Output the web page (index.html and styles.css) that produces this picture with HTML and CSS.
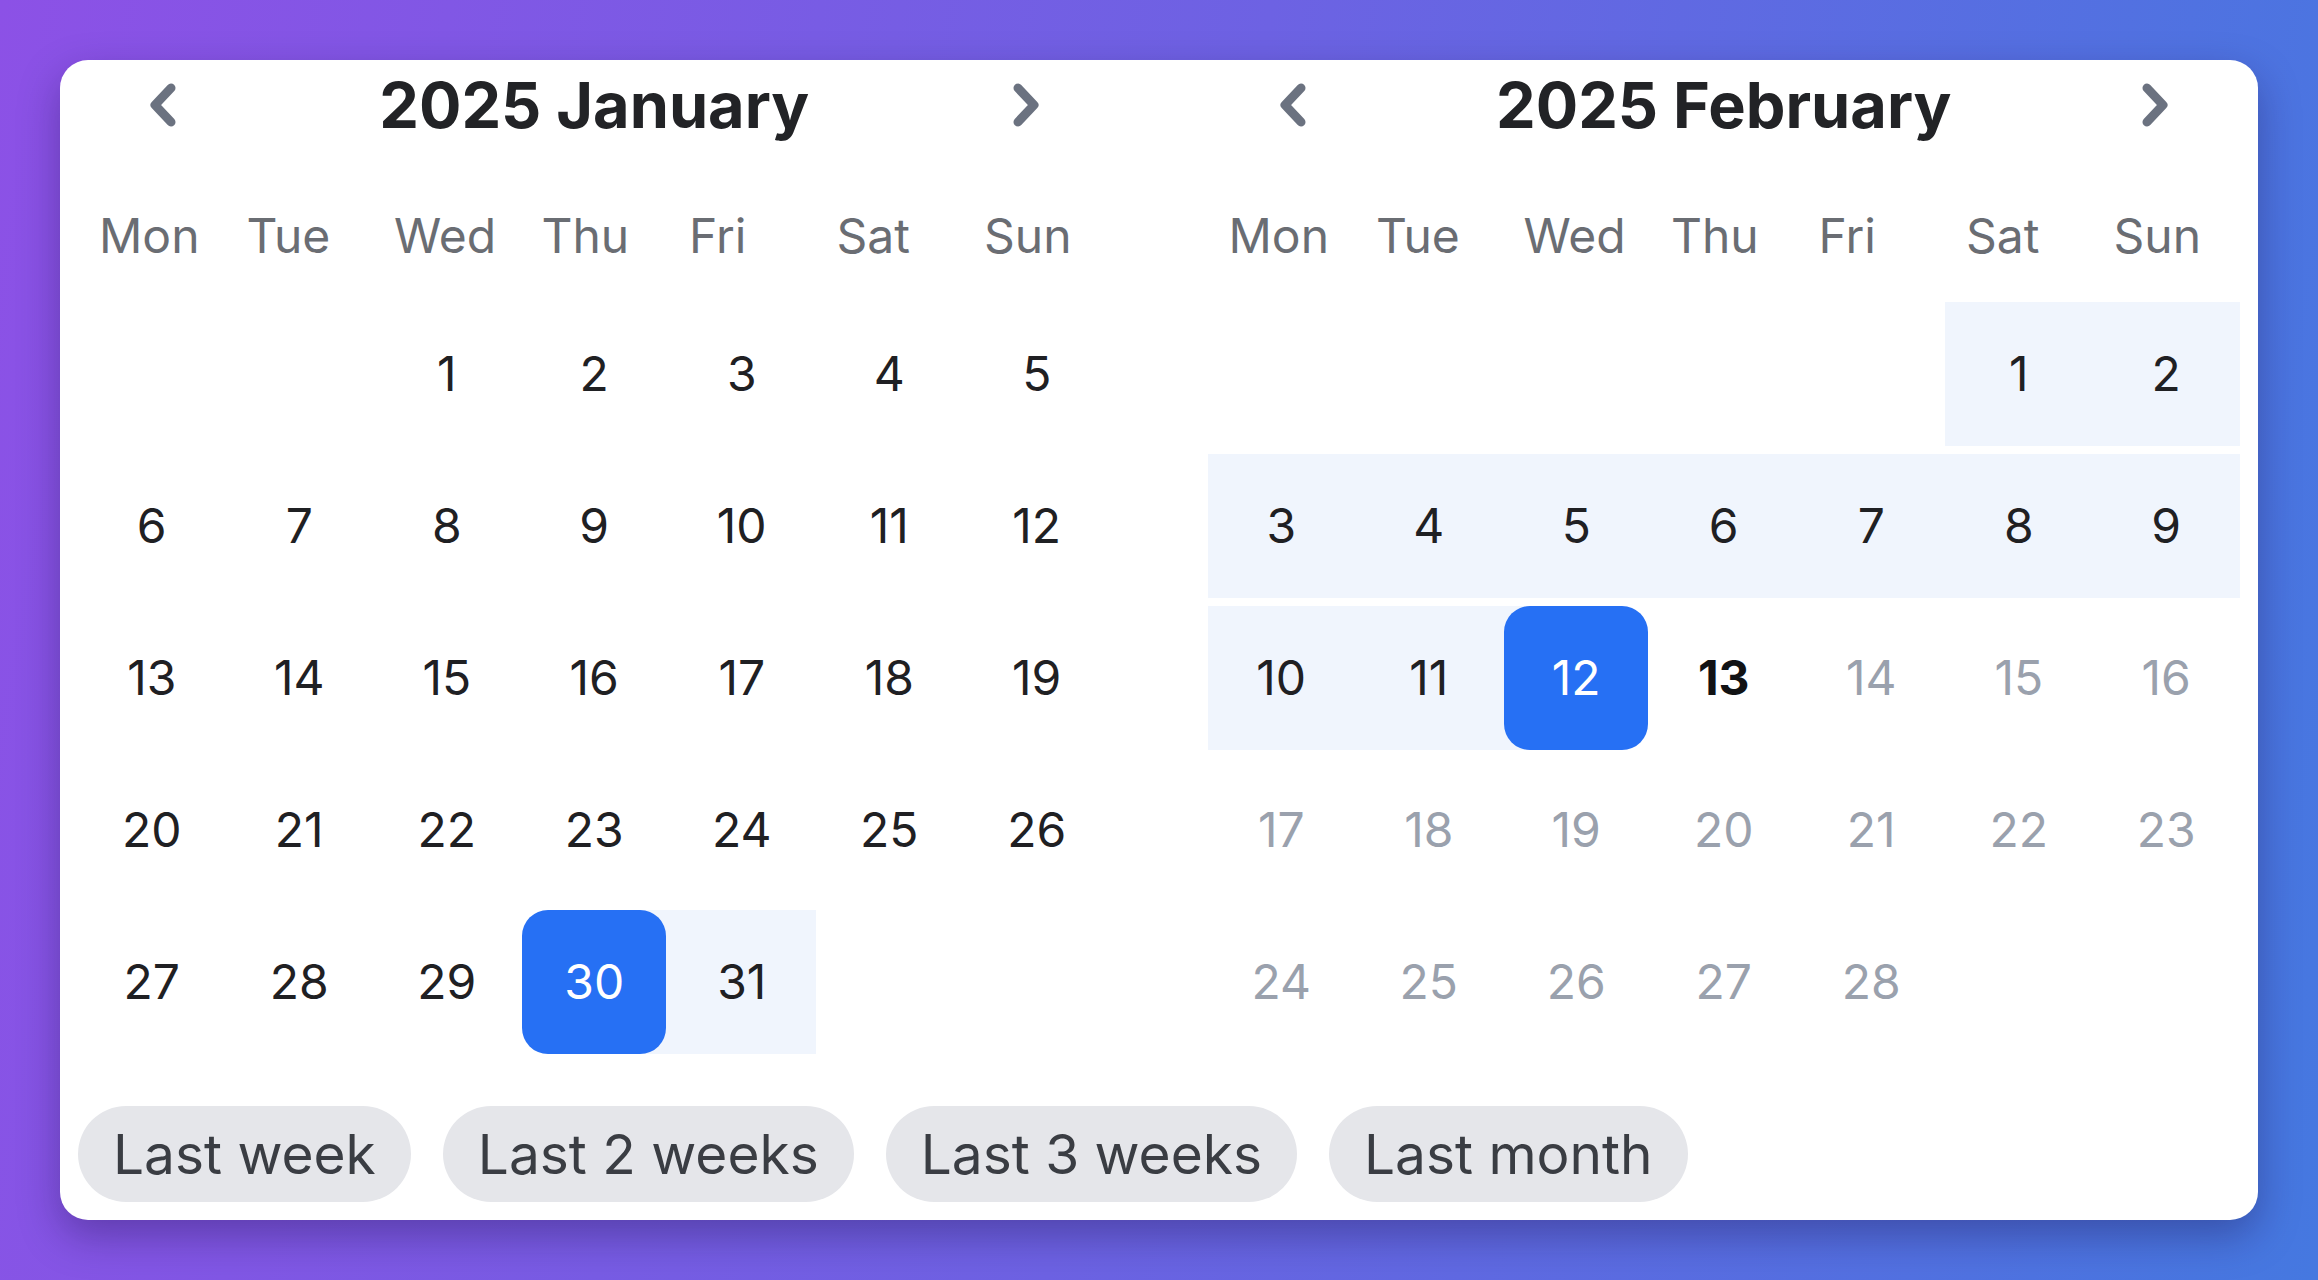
FILE: index.html
```html
<!DOCTYPE html>
<html lang="en">
<head>
<meta charset="utf-8">
<title>Date range picker</title>
<link rel="stylesheet" href="styles.css">
</head>
<body>
<div class="card">
  <div class="months">
    <section class="cal">
      <div class="cal-head">
        <button class="nav" aria-label="Previous month"><svg viewBox="0 0 32 46" width="32" height="46"><polyline points="24,6 8,23 24,40" /></svg></button>
        <div class="title">2025 January</div>
        <button class="nav" aria-label="Next month"><svg viewBox="0 0 32 46" width="32" height="46"><polyline points="8,6 24,23 8,40" /></svg></button>
      </div>
      <div class="weekdays">
        <span>Mon</span><span>Tue</span><span>Wed</span><span>Thu</span><span>Fri</span><span>Sat</span><span>Sun</span>
      </div>
      <div class="days">
        <span class="day empty"></span><span class="day empty"></span>
        <span class="day">1</span><span class="day">2</span><span class="day">3</span><span class="day">4</span><span class="day">5</span>
        <span class="day">6</span><span class="day">7</span><span class="day">8</span><span class="day">9</span><span class="day">10</span><span class="day">11</span><span class="day">12</span>
        <span class="day">13</span><span class="day">14</span><span class="day">15</span><span class="day">16</span><span class="day">17</span><span class="day">18</span><span class="day">19</span>
        <span class="day">20</span><span class="day">21</span><span class="day">22</span><span class="day">23</span><span class="day">24</span><span class="day">25</span><span class="day">26</span>
        <span class="day">27</span><span class="day">28</span><span class="day">29</span>
        <span class="day range-start"><span class="sel">30</span></span>
        <span class="day in-range">31</span>
      </div>
    </section>
    <section class="cal">
      <div class="cal-head">
        <button class="nav" aria-label="Previous month"><svg viewBox="0 0 32 46" width="32" height="46"><polyline points="24,6 8,23 24,40" /></svg></button>
        <div class="title">2025 February</div>
        <button class="nav" aria-label="Next month"><svg viewBox="0 0 32 46" width="32" height="46"><polyline points="8,6 24,23 8,40" /></svg></button>
      </div>
      <div class="weekdays">
        <span>Mon</span><span>Tue</span><span>Wed</span><span>Thu</span><span>Fri</span><span>Sat</span><span>Sun</span>
      </div>
      <div class="days">
        <span class="day empty"></span><span class="day empty"></span><span class="day empty"></span><span class="day empty"></span><span class="day empty"></span>
        <span class="day in-range">1</span><span class="day in-range">2</span>
        <span class="day in-range">3</span><span class="day in-range">4</span><span class="day in-range">5</span><span class="day in-range">6</span><span class="day in-range">7</span><span class="day in-range">8</span><span class="day in-range">9</span>
        <span class="day in-range">10</span><span class="day in-range">11</span>
        <span class="day range-end"><span class="sel">12</span></span>
        <span class="day today">13</span>
        <span class="day off">14</span><span class="day off">15</span><span class="day off">16</span>
        <span class="day off">17</span><span class="day off">18</span><span class="day off">19</span><span class="day off">20</span><span class="day off">21</span><span class="day off">22</span><span class="day off">23</span>
        <span class="day off">24</span><span class="day off">25</span><span class="day off">26</span><span class="day off">27</span><span class="day off">28</span>
      </div>
    </section>
  </div>
  <div class="presets">
    <button class="preset">Last week</button>
    <button class="preset">Last 2 weeks</button>
    <button class="preset">Last 3 weeks</button>
    <button class="preset">Last month</button>
  </div>
</div>
</body>
</html>
```

FILE: styles.css
```css
* { box-sizing: border-box; }

html, body { margin: 0; padding: 0; }

body {
  width: 2318px;
  height: 1280px;
  overflow: hidden;
  padding: 60px;
  background: linear-gradient(100deg, #8c51e6 0%, #6d62e3 50%, #4578e0 100%);
  font-family: Inter, "Noto Sans", "Liberation Sans", sans-serif;
}

.card {
  width: 2198px;
  height: 1160px;
  background: #ffffff;
  border-radius: 28px;
  box-shadow: 0 16px 40px rgba(25, 15, 70, 0.35);
  padding: 0 18px 18px 18px;
}

.months {
  display: flex;
  gap: 97px;
}

.cal {
  flex: 1;
}

.cal-head {
  height: 89px;
  display: flex;
  align-items: center;
  padding: 0 55px;
}

.nav {
  width: 60px;
  height: 60px;
  border: 0;
  background: transparent;
  padding: 0;
  display: flex;
  align-items: center;
  justify-content: center;
}

.nav svg polyline {
  fill: none;
  stroke: #6b7280;
  stroke-width: 9;
  stroke-linecap: round;
  stroke-linejoin: round;
}

.title {
  flex: 1;
  text-align: center;
  font-size: 63px;
  font-weight: 700;
  color: #222326;
  letter-spacing: 0;
}

.weekdays {
  height: 152px;
  padding-top: 21px;
  display: grid;
  grid-template-columns: repeat(7, 1fr);
  align-items: center;
}

.weekdays span {
  padding-left: 21px;
  font-size: 48px;
  color: #6a6d73;
}

.days {
  display: grid;
  grid-template-columns: repeat(7, 1fr);
  grid-auto-rows: 144px;
  row-gap: 8px;
  margin-top: 1px;
}

.day {
  display: flex;
  align-items: center;
  justify-content: center;
  padding-bottom: 2px;
  font-size: 48px;
  color: #1f2023;
}

.in-range { background: #f0f5fd; }

.range-start { background: linear-gradient(to right, transparent 50%, #f0f5fd 50%); }

.range-end { background: linear-gradient(to right, #f0f5fd 50%, transparent 50%); }

.sel {
  width: 144px;
  height: 144px;
  margin-bottom: -2px;
  padding-bottom: 2px;
  border-radius: 26px;
  background: #2670f4;
  color: #ffffff;
  display: flex;
  align-items: center;
  justify-content: center;
}

.today { font-weight: 700; color: #111214; }

.off { color: #9aa1ad; }

.presets {
  display: flex;
  gap: 32px;
  margin-top: 52px;
}

.preset {
  height: 96px;
  padding: 0 35px;
  border: 0;
  border-radius: 48px;
  background: #e5e6ea;
  color: #3a3d43;
  font-family: Inter, "Noto Sans", "Liberation Sans", sans-serif;
  font-size: 55px;
  font-weight: 400;
}
```
